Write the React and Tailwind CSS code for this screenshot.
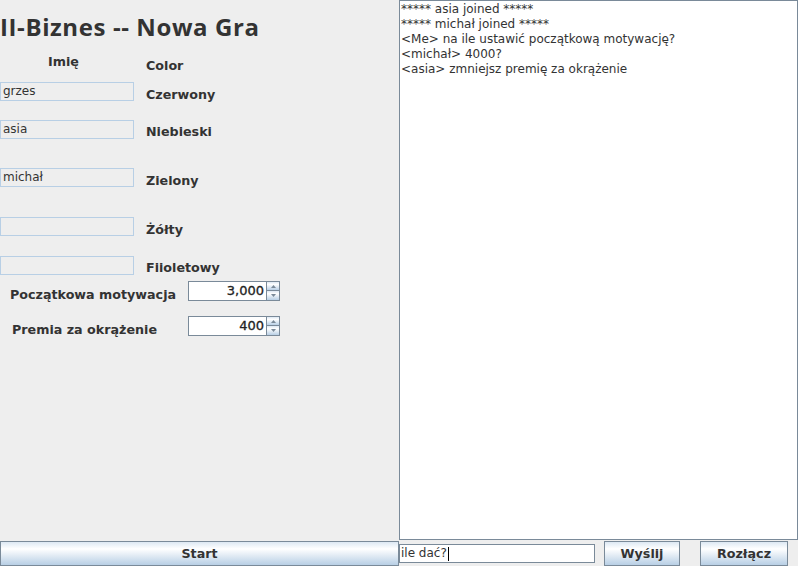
import React from "react";

const btnBg =
  "bg-[linear-gradient(to_bottom,#dde8f3_0%,#ffffff_30%,#b8cfe5_100%)]";

function Field({ value }) {
  return (
    <div className="w-[134px] h-[19px] border border-[#b8cfe5] bg-[#eeeeee] text-[12px] leading-[17px] pl-[2px] text-[#333333]">
      {value}
    </div>
  );
}

function Label({ children, className = "" }) {
  return (
    <div className={"text-[12.7px] font-bold leading-[15px] text-[#333333] " + className}>
      {children}
    </div>
  );
}

function Spinner({ value }) {
  return (
    <div className="flex h-[20px]">
      <div className="w-[78px] h-[20px] bg-white border-l border-t border-b border-[#7a8a99] text-right text-[13px] leading-[18px] pr-[2px] text-[#222222] [-webkit-text-stroke:0.3px_#222222]">
        {value}
      </div>
      <div className="flex flex-col w-[14px] h-[20px]">
        <div className={"h-[10px] border border-[#7a8a99] flex items-center justify-center " + btnBg}>
          <svg width="5" height="3" viewBox="0 0 5 3">
            <path d="M2.5 0 L5 3 L0 3 Z" fill="#7a8a99" />
          </svg>
        </div>
        <div className={"h-[10px] border border-t-0 border-[#7a8a99] flex items-center justify-center " + btnBg}>
          <svg width="5" height="3" viewBox="0 0 5 3">
            <path d="M0 0 L5 0 L2.5 3 Z" fill="#7a8a99" />
          </svg>
        </div>
      </div>
    </div>
  );
}

export default function App() {
  const chat = [
    "***** asia joined *****",
    "***** michał joined *****",
    "<Me> na ile ustawić początkową motywację?",
    "<michał> 4000?",
    "<asia> zmniejsz premię za okrążenie",
  ];
  return (
    <div
      className="w-[798px] h-[566px] bg-[#eeeeee] flex flex-col overflow-hidden text-[#333333]"
      style={{ fontFamily: '"DejaVu Sans", sans-serif' }}
    >
      <div className="flex h-[541px]">
        <div className="w-[399px] flex flex-col">
          <div className="h-[44px] pt-[13px]">
            <div
              className="text-[24px] font-bold leading-[28px] tracking-[0.6px] text-[#333333] whitespace-pre"
              style={{ fontFamily: '"Open Sans", "DejaVu Sans", sans-serif' }}
            >
              II-Biznes -- Nowa Gra
            </div>
          </div>
          <div className="flex h-[38px] items-start">
            <Label className="ml-[48px] mt-[10px] w-[86px]">Imię</Label>
            <Label className="ml-[12px] mt-[14px]">Color</Label>
          </div>
          <div className="flex h-[38px] items-start">
            <Field value="grzes" />
            <Label className="ml-[12px] mt-[5px]">Czerwony</Label>
          </div>
          <div className="flex h-[48px] items-start">
            <Field value="asia" />
            <Label className="ml-[12px] mt-[4px]">Niebieski</Label>
          </div>
          <div className="flex h-[49px] items-start">
            <Field value="michał" />
            <Label className="ml-[12px] mt-[5px]">Zielony</Label>
          </div>
          <div className="flex h-[39px] items-start">
            <Field value="" />
            <Label className="ml-[12px] mt-[5px]">Żółty</Label>
          </div>
          <div className="flex h-[25px] items-start">
            <Field value="" />
            <Label className="ml-[12px] mt-[4px]">Fiioletowy</Label>
          </div>
          <div className="flex h-[35px] items-start">
            <Label className="ml-[10px] mt-[6px] w-[178px]">Początkowa motywacja</Label>
            <Spinner value="3,000" />
          </div>
          <div className="flex h-[25px] items-start">
            <Label className="ml-[12px] mt-[6px] w-[176px]">Premia za okrążenie</Label>
            <Spinner value="400" />
          </div>
        </div>
        <div className="w-[399px] h-[540px] bg-white border border-[#7a8a99] pl-[1px] pt-[1px] text-[12px] leading-[15px] text-[#333333]">
          {chat.map((l, i) => (
            <div key={i} className="whitespace-pre">{l}</div>
          ))}
        </div>
      </div>
      <div className="flex h-[25px] items-start">
        <div
          className={
            "w-[399px] h-[25px] border border-[#7a8a99] flex items-center justify-center text-[12.7px] font-bold text-[#333333] " +
            btnBg
          }
        >
          Start
        </div>
        <div className="mt-[3px] w-[196px] h-[19px] bg-white border border-[#7a8a99] text-[12px] leading-[17px] pl-[1px] text-[#333333] flex items-center">
          <span>ile dać?</span>
          <span className="inline-block w-[1px] h-[14px] bg-black ml-[1px]" />
        </div>
        <div
          className={
            "ml-[9px] w-[76px] h-[25px] border border-[#7a8a99] flex items-center justify-center text-[12.7px] font-bold text-[#333333] " +
            btnBg
          }
        >
          Wyślij
        </div>
        <div
          className={
            "ml-[20px] w-[88px] h-[25px] border border-[#7a8a99] flex items-center justify-center text-[12.7px] font-bold text-[#333333] " +
            btnBg
          }
        >
          Rozłącz
        </div>
      </div>
    </div>
  );
}
